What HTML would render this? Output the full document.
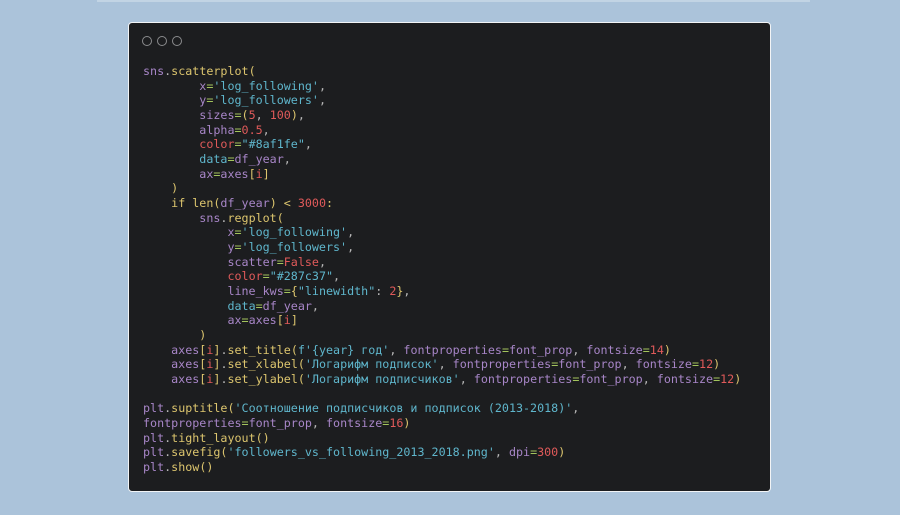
<!DOCTYPE html><html><head><meta charset="utf-8"><style>
html,body{margin:0;padding:0}
body{width:900px;height:515px;background:#abc3da;position:relative;overflow:hidden}
.top{position:absolute;left:97px;top:0;width:713px;height:2px;background:#c2d4e4}
.win{position:absolute;left:128px;top:22px;width:641px;height:468px;background:#1c1d1f;border:1.5px solid #f2f4f6;border-radius:4px}
.c{position:absolute;top:13px;width:8px;height:8px;border:1px solid #8a8b8d;border-radius:50%}
pre{position:absolute;left:14px;top:41px;margin:0;font-family:"DejaVu Sans Mono","Liberation Mono",monospace;font-size:11.7px;line-height:14.67px;color:#a886c8}
.y{color:#dcc56e}.g{color:#a3c45c}.s{color:#5fb6cc}.n{color:#e05a5a}.w{color:#b8b8b8}.p{color:#a886c8}
</style></head><body><div class="top"></div>
<div class="win"><div class="c" style="left:13px"></div><div class="c" style="left:28px"></div><div class="c" style="left:43px"></div>
<pre>sns<span class="w">.</span><span class="y">scatterplot(</span>
        x<span class="g">=</span><span class="s">'log_following'</span><span class="w">,</span>
        y<span class="g">=</span><span class="s">'log_followers'</span><span class="w">,</span>
        sizes<span class="g">=</span><span class="y">(</span><span class="n">5</span><span class="w">,</span> <span class="n">100</span><span class="y">)</span><span class="w">,</span>
        alpha<span class="g">=</span><span class="n">0.5</span><span class="w">,</span>
        <span class="n">color</span><span class="g">=</span><span class="s">"#8af1fe"</span><span class="w">,</span>
        <span class="s">data</span><span class="g">=</span>df_year<span class="w">,</span>
        ax<span class="g">=</span>axes<span class="y">[</span><span class="n">i</span><span class="y">]</span>
    <span class="y">)</span>
    <span class="y">if len(</span>df_year<span class="y">) &lt; </span><span class="n">3000</span><span class="y">:</span>
        sns<span class="w">.</span><span class="y">regplot(</span>
            x<span class="g">=</span><span class="s">'log_following'</span><span class="w">,</span>
            y<span class="g">=</span><span class="s">'log_followers'</span><span class="w">,</span>
            scatter<span class="g">=</span><span class="n">False</span><span class="w">,</span>
            <span class="n">color</span><span class="g">=</span><span class="s">"#287c37"</span><span class="w">,</span>
            line_kws<span class="g">=</span><span class="y">{</span><span class="s">"linewidth"</span><span class="w">:</span> <span class="n">2</span><span class="y">}</span><span class="w">,</span>
            <span class="s">data</span><span class="g">=</span>df_year<span class="w">,</span>
            ax<span class="g">=</span>axes<span class="y">[</span><span class="n">i</span><span class="y">]</span>
        <span class="y">)</span>
    axes<span class="y">[</span><span class="n">i</span><span class="y">]</span><span class="w">.</span><span class="y">set_title(</span><span class="s">f'{year} год'</span><span class="w">,</span> fontproperties<span class="g">=</span>font_prop<span class="w">,</span> fontsize<span class="g">=</span><span class="n">14</span><span class="y">)</span>
    axes<span class="y">[</span><span class="n">i</span><span class="y">]</span><span class="w">.</span><span class="y">set_xlabel(</span><span class="s">'Логарифм подписок'</span><span class="w">,</span> fontproperties<span class="g">=</span>font_prop<span class="w">,</span> fontsize<span class="g">=</span><span class="n">12</span><span class="y">)</span>
    axes<span class="y">[</span><span class="n">i</span><span class="y">]</span><span class="w">.</span><span class="y">set_ylabel(</span><span class="s">'Логарифм подписчиков'</span><span class="w">,</span> fontproperties<span class="g">=</span>font_prop<span class="w">,</span> fontsize<span class="g">=</span><span class="n">12</span><span class="y">)</span>

plt<span class="w">.</span><span class="y">suptitle(</span><span class="s">'Соотношение подписчиков и подписок (2013-2018)'</span><span class="w">,</span>
fontproperties<span class="g">=</span>font_prop<span class="w">,</span> fontsize<span class="g">=</span><span class="n">16</span><span class="y">)</span>
plt<span class="w">.</span><span class="y">tight_layout()</span>
plt<span class="w">.</span><span class="y">savefig(</span><span class="s">'followers_vs_following_2013_2018.png'</span><span class="w">,</span> dpi<span class="g">=</span><span class="n">300</span><span class="y">)</span>
plt<span class="w">.</span><span class="y">show()</span></pre></div>
</body></html>
